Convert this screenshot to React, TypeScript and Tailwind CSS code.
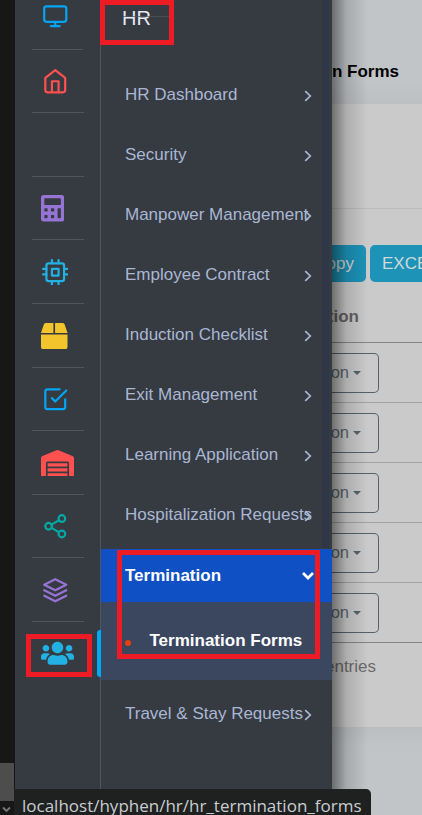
import type { ReactNode } from "react";
import { FiMonitor, FiHome, FiCpu, FiCheckSquare, FiShare2, FiLayers } from "react-icons/fi";
import { FaCalculator, FaBox, FaWarehouse, FaUsers } from "react-icons/fa";

type RailItem = { id: string; height: string; pad: string; icon: ReactNode };

const feather = { size: 26.5, strokeWidth: 2 };

const railItems: RailItem[] = [
  { id: "home", height: "h-[63px]", pad: "pl-[26.5px]", icon: <FiHome {...feather} className="text-[#ff5050]" /> },
  { id: "blank", height: "h-[64px]", pad: "", icon: null },
  { id: "accounts", height: "h-[63px]", pad: "pl-[26px]", icon: <FaCalculator className="h-[26.5px] w-[23.2px] text-[#9674d4]" /> },
  { id: "cpu", height: "h-[64px]", pad: "pl-[26.5px]", icon: <FiCpu {...feather} className="text-[#22b1e2]" /> },
  { id: "box", height: "h-[64px]", pad: "pl-[26px]", icon: <FaBox size={26.5} className="text-[#f4c42c]" /> },
  { id: "tasks", height: "h-[63px]", pad: "pl-[26.5px]", icon: <FiCheckSquare {...feather} className="text-[#03a5f4]" /> },
  { id: "warehouse", height: "h-[64px]", pad: "pl-[26px]", icon: <FaWarehouse className="h-[26.5px] w-[33px] text-[#ff5050]" /> },
  { id: "share", height: "h-[63px]", pad: "pl-[26.5px]", icon: <FiShare2 {...feather} className="text-[#03a9a4]" /> },
  { id: "layers", height: "h-[64px]", pad: "pl-[26.5px]", icon: <FiLayers {...feather} className="text-[#9674d4]" /> },
];

const menu = [
  "HR Dashboard",
  "Security",
  "Manpower Management",
  "Employee Contract",
  "Induction Checklist",
  "Exit Management",
  "Learning Application",
  "Hospitalization Requests",
];

function ChevronRight() {
  return (
    <svg className="absolute top-[21px] right-[20px] h-[12px] w-[8px]" viewBox="0 0 8 12" fill="none" stroke="#a9b7d3" strokeWidth="1.7">
      <path d="M1.2 1.2 6.3 6 1.2 10.8" />
    </svg>
  );
}

function MenuRow({ label }: { label: string }) {
  return (
    <li className="relative flex h-[52px] items-center pl-6 text-[#a9b7d3]">
      <span className="whitespace-nowrap">{label}</span>
      <ChevronRight />
    </li>
  );
}

function ActionRow() {
  return (
    <div className="flex h-[60px] items-center border-b border-[#a3a3a3]">
      <button className="flex h-[40px] w-[47px] items-center justify-end gap-[4px] rounded-r-[5px] border border-l-0 border-[#53636d] pr-[17px] text-[16.5px] text-[#59666e]">
        <span>ction</span>
        <span className="h-0 w-0 shrink-0 border-x-[4px] border-t-[4px] border-x-transparent border-t-[#53636d]" />
      </button>
    </div>
  );
}

function IconRail() {
  return (
    <nav className="relative h-full w-[86px] shrink-0 border-r border-[#50555f] bg-[#363a41]">
      <div className="mx-[17px] h-[50px] border-b border-[#50555f] pt-[3px]">
        <FiMonitor {...feather} className="ml-[9.5px] text-[#03a5f4]" />
      </div>
      {railItems.map((item) => (
        <div key={item.id} className={`flex items-center ${item.height} ${item.pad} relative`}>
          {item.icon}
          <span className="absolute right-[16px] bottom-0 left-[17px] h-px bg-[#50555f]" />
        </div>
      ))}
      <div className="flex h-[62px] items-center pl-[26px]">
        <FaUsers className="h-[26.5px] w-[33px] text-[#22b1e2]" />
      </div>
      <span className="absolute top-[630px] right-[-1px] h-[47px] w-[4px] rounded-l-[3px] bg-[#03a9f4]" />
    </nav>
  );
}

function SideMenu() {
  return (
    <aside className="relative h-full w-[231px] shrink-0 bg-[#363a41] text-[17px]">
      <div className="absolute top-0 right-[3px] h-[548px] w-[7px] bg-[#2f3645]" />
      <header className="relative flex h-[69px] pt-[6px] pl-[21px] text-[20px] leading-[24px] text-[#e4e9f4]">
        <span>HR</span>
        <span className="absolute top-[16px] left-[22px] h-px w-[47px] bg-[#50555f]/70" />
      </header>
      <ul className="flex flex-col gap-2">
        {menu.map((label) => (
          <MenuRow key={label} label={label} />
        ))}
        <li className="font-bold text-white">
          <div className="relative flex h-[53px] items-center bg-[#0f51c4] pl-6">
            Termination
            <svg className="absolute top-[22px] right-[17px] h-[10px] w-[14px]" viewBox="0 0 14 10" fill="none" stroke="white" strokeWidth="2.7">
              <path d="M2 2 7 7 12 2" />
            </svg>
          </div>
          <div className="flex h-[78px] items-center bg-[#3b475f] pl-[24px]">
            <span className="mt-[4px] h-[6px] w-[6px] rounded-full bg-[#e8400c]" />
            <span className="ml-[18.5px]">Termination Forms</span>
          </div>
        </li>
        <MenuRow label={"Travel & Stay Requests"} />
      </ul>
    </aside>
  );
}

function Content() {
  return (
    <main className="relative flex h-full flex-1 flex-col overflow-hidden bg-[#c1c5c8]">
      <h1 className="flex h-[104px] shrink-0 items-start justify-end bg-linear-to-b from-[#c1c5c8] from-80% to-[#bdbfc2] pt-[60px] pr-[23px] text-[17px] leading-6 font-bold whitespace-nowrap text-black">
        Termination Forms
      </h1>
      <section className="h-[623px] shrink-0 bg-[#cacaca]">
        <div className="h-[105px] border-b border-[#bbbbbb]" />
        <div className="flex gap-1 pt-[36px] text-[17px] text-[#d2d8da]">
          <button className="flex h-[37px] w-[34px] shrink-0 items-center justify-end rounded-r-[5px] bg-[#1c93b7] pr-[12px]">Copy</button>
          <button className="flex h-[37px] w-[80px] shrink-0 items-center rounded-[5px] bg-[#1c93b7] pl-[12px]">EXCEL</button>
        </div>
        <div className="flex h-[61px] w-full items-start border-b border-[#858585] pt-[23px] text-[17px] leading-6 font-bold text-[#646161]">
          <span className="flex w-[27px] justify-end">Action</span>
        </div>
        <ActionRow />
        <ActionRow />
        <ActionRow />
        <ActionRow />
        <div className="flex h-[60px] items-center border-b border-[#858585]">
          <button className="flex h-[40px] w-[47px] items-center justify-end gap-[4px] rounded-r-[5px] border border-l-0 border-[#53636d] pr-[17px] text-[16.5px] text-[#59666e]">
            <span>ction</span>
            <span className="h-0 w-0 shrink-0 border-x-[4px] border-t-[4px] border-x-transparent border-t-[#53636d]" />
          </button>
        </div>
        <p className="flex w-[44px] justify-end pt-[12px] text-[17px] leading-6 text-[#6e6b6b]">entries</p>
      </section>
      <div className="h-5 bg-linear-to-b from-[#babec1] to-[#c1c5c8]" />
      <div className="absolute inset-y-0 left-0 w-[36px] bg-linear-to-r from-black/45 via-black/14 via-40% to-transparent" />
    </main>
  );
}

export default function App() {
  return (
    <div className="relative flex h-[815px] w-[422px] overflow-hidden bg-[#171717] font-['Liberation_Sans',Arial,sans-serif]">
      <div className="flex h-full w-[15px] shrink-0 flex-col bg-[#171717] pt-[763px]">
        <div className="h-[38px] w-[14px] bg-[#4d4d4d]" />
        <svg className="mt-[5px] ml-[2px] h-[7px] w-[9px]" viewBox="0 0 9 7" fill="none" stroke="#777" strokeWidth="1.8">
          <path d="M1 1.5 4.5 5 8 1.5" />
        </svg>
      </div>
      <IconRail />
      <SideMenu />
      <Content />

      <div className="absolute top-0 left-[100px] h-[45px] w-[74px] border-5 border-[#ed1c24]" />
      <div className="absolute top-[634px] left-[26px] h-[43px] w-[66px] border-5 border-[#ed1c24]" />
      <div className="absolute top-[550px] left-[117px] h-[109px] w-[203px] border-5 border-[#ed1c24]" />

      <div className="absolute top-[789px] left-[14px] h-[26px] w-[357px] rounded-tr-[5px] bg-[#1f2121] pt-[5px] pl-[8px] font-['Open_Sans','Noto_Sans',sans-serif] text-[17px] leading-[24px] whitespace-nowrap text-[#c9cdcf]">
        localhost/hyphen/hr/hr_termination_forms
      </div>
    </div>
  );
}
